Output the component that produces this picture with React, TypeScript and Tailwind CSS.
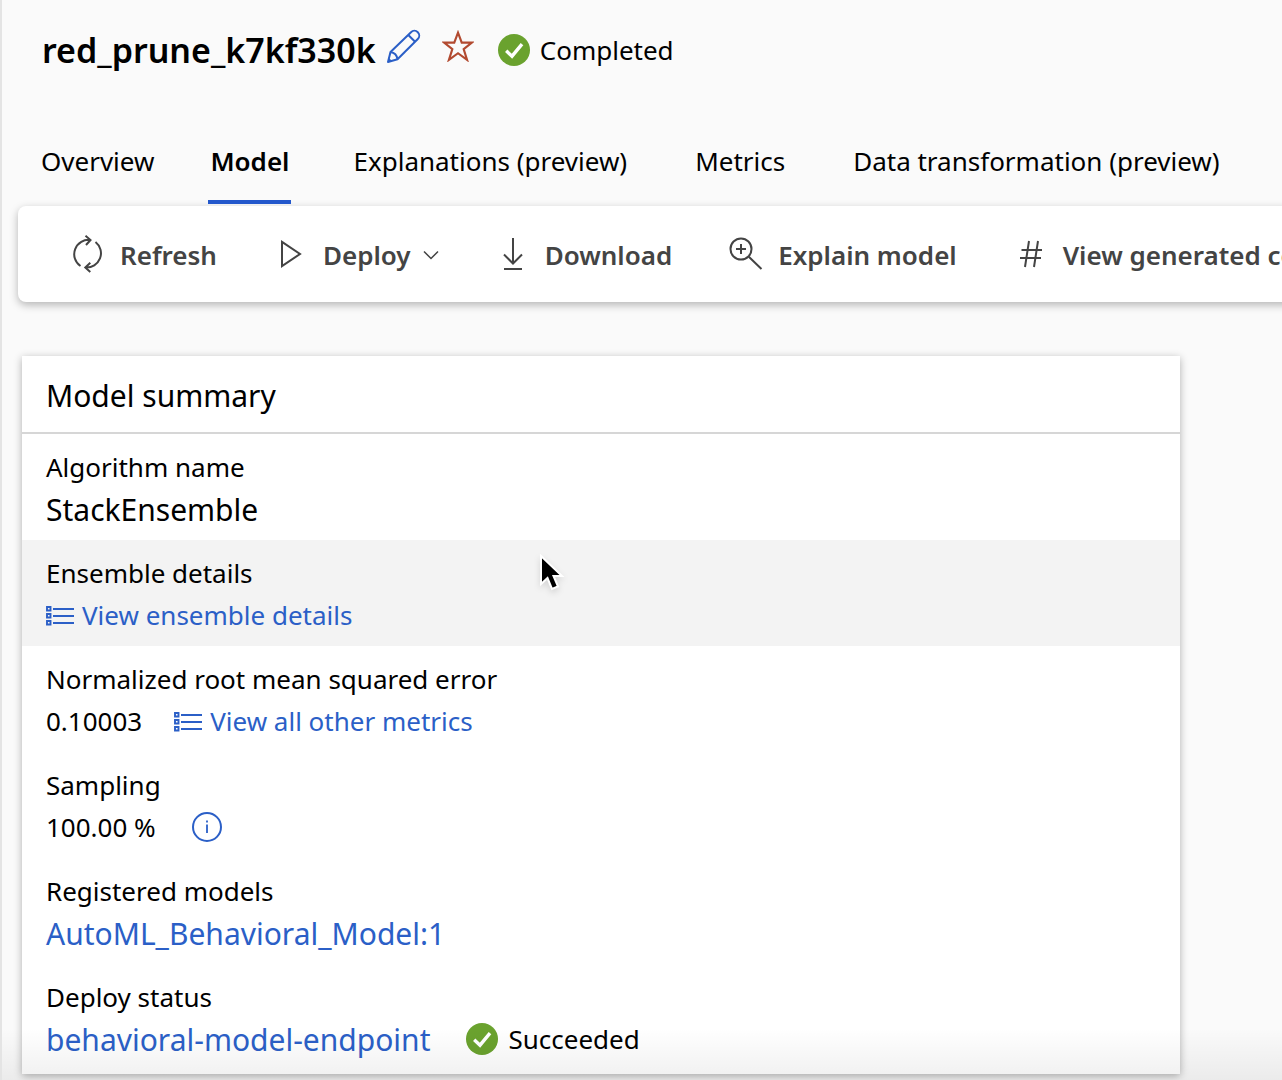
import type { ReactNode } from "react";

function PencilIcon() {
  return (
    <svg width="36" height="36" viewBox="0 0 36 36" fill="none" stroke="#2b5fc7" strokeWidth="2" strokeLinejoin="round" aria-hidden="true">
      <path d="M2 34 4.5 24 25 4.2a4.8 4.8 0 0 1 6.8 6.8L11.5 31.3Z" />
      <path d="M4.5 24c4 .6 6.400 3 7 7.300M22.300 7l6.800 6.800" />
      <path d="M2 34l1-4 3 3Z" fill="#2b5fc7" stroke="none" />
    </svg>
  );
}

function StarIcon() {
  return (
    <svg width="32" height="32" viewBox="1 1 30 30" fill="none" stroke="#b24a30" strokeWidth="2" aria-hidden="true">
      <path d="M16 3.500 19.500 12.800H29L21.300 18.900 24.500 29 16 22.800 7.500 29 10.700 18.900 3 12.800h9.500Z" />
    </svg>
  );
}

function CheckBadge() {
  return (
    <svg className="shrink-0" width="32" height="32" viewBox="0 0 32 32" aria-hidden="true">
      <circle cx="16" cy="16" r="16" fill="#6aa22e" />
      <path d="M8.200 16.800 14 22.200 24 10.200" fill="none" stroke="#fff" strokeWidth="3.400" />
    </svg>
  );
}

function RefreshIcon() {
  return (
    <svg width="36" height="40" viewBox="0 0 36 40" fill="none" stroke="#444" strokeWidth="2" aria-hidden="true">
      <path d="M10.500 32A14.300 14.300 0 0 1 20.500 6M15.500 1.800l5 4.200-4.500 5" />
      <path d="M25.500 8A14.300 14.300 0 0 1 15.500 33.500M20.300 28.700l-5 4.800 5 4.500" />
    </svg>
  );
}

function PlayIcon() {
  return (
    <svg width="22" height="30" viewBox="0 0 22 30" fill="none" stroke="#444" strokeWidth="2" aria-hidden="true">
      <path d="M2 2.800 20 15 2 27.200Z" />
    </svg>
  );
}

function ChevronIcon() {
  return (
    <svg width="16" height="10" viewBox="0 0 16 10" fill="none" stroke="#444" strokeWidth="1.500" aria-hidden="true">
      <path d="m1 1.500 7 7 7-7" />
    </svg>
  );
}

function DownloadIcon() {
  return (
    <svg width="22" height="34" viewBox="0 0 22 34" fill="none" stroke="#444" strokeWidth="2" aria-hidden="true">
      <path d="M11 1v25M2 17.500l9 9 9-9M2 32h18" />
    </svg>
  );
}

function ZoomInIcon() {
  return (
    <svg width="34" height="34" viewBox="0 0 34 34" fill="none" stroke="#444" strokeWidth="2" aria-hidden="true">
      <circle cx="12" cy="12" r="10.500" />
      <path d="M7 12h10M12 7v10M19.800 19.800 32.500 32" />
    </svg>
  );
}

function HashIcon() {
  return (
    <svg width="24" height="28" viewBox="0 0 24 28" fill="none" stroke="#444" strokeWidth="2" aria-hidden="true">
      <path d="M10 1 6 27M19 1l-4 26M2.500 10H23M1 18h21" />
    </svg>
  );
}

function ListIcon() {
  return (
    <svg className="mt-0.5 shrink-0" width="28" height="22" viewBox="0 0 28 22" fill="none" stroke="#2b5fc7" aria-hidden="true">
      <path d="M1 2h3.500v3.500H1zM1 9h3.500v3.500H1zM1 16h3.500v3.500H1z" strokeWidth="1.900" />
      <path d="M7 4h21M7 11h21M7 18h21" strokeWidth="2" />
    </svg>
  );
}

function InfoIcon() {
  return (
    <svg width="30" height="30" viewBox="0 0 30 30" fill="none" stroke="#2b5fc7" aria-hidden="true">
      <circle cx="15" cy="15" r="14" strokeWidth="2" />
      <path d="M15 12.500V21M15 8.500v2" strokeWidth="1.800" />
    </svg>
  );
}

function CursorIcon() {
  return (
    <svg className="drop-shadow-md" width="28" height="38" viewBox="0 0 28 38" aria-hidden="true">
      <path d="M2 2v28l6.500-6 4.500 11 6-2.500L14.500 22H23Z" fill="#000" stroke="#fff" strokeWidth="2" />
    </svg>
  );
}

function Tab({ children, active = false }: { children: ReactNode; active?: boolean }) {
  return (
    <button
      role="tab"
      aria-selected={active}
      className={
        active
          ? "h-21 shrink-0 border-b-4 border-[#2458cc] px-0.5 pt-0.5 font-semibold"
          : "h-21 shrink-0 border-b-4 border-transparent pt-0.5 pr-1.5 pl-3.5"
      }
    >
      {children}
    </button>
  );
}

function Command({ icon, children }: { icon: ReactNode; children: ReactNode }) {
  return (
    <button className="flex shrink-0 items-center gap-3.5">
      <span className="flex w-9 justify-center">{icon}</span>
      <span className="pt-0.5">{children}</span>
    </button>
  );
}

function Row({ label, children, shaded = false }: { label: string; children: ReactNode; shaded?: boolean }) {
  return (
    <div className={shaded ? "relative bg-[#f3f3f3] px-6 pt-3.5 pb-2" : "px-6 pt-3.5 pb-2"}>
      <dt className="leading-[38px]">{label}</dt>
      <dd className="flex h-[46px] items-center">{children}</dd>
    </div>
  );
}

export default function App() {
  return (
    <div className="relative min-h-screen overflow-hidden border-l-2 border-[#e4e4e4] bg-[#fafafa] font-['Noto_Sans','Open_Sans',sans-serif] text-[26px] whitespace-nowrap text-black">
      <header className="flex h-[120px] items-start pt-6 pl-10">
        <h1 className="text-[34px] leading-[52px] font-semibold">red_prune_k7kf330k</h1>
        <button aria-label="Edit name" className="mt-1 ml-2.5"><PencilIcon /></button>
        <button aria-label="Add to favorites" className="mt-1.5 ml-5"><StarIcon /></button>
        <div className="ml-6 flex h-[52px] items-center gap-2.5">
          <CheckBadge />
          <span>Completed</span>
        </div>
      </header>

      <div role="tablist" className="flex gap-12 pl-[25px]">
        <Tab>Overview</Tab>
        <Tab active>Model</Tab>
        <Tab>Explanations (preview)</Tab>
        <Tab>Metrics</Tab>
        <Tab>Data transformation (preview)</Tab>
      </div>

      <div className="mt-0.5 -mr-4 ml-4 rounded-l-lg bg-white shadow-[0_3px_8px_rgba(0,0,0,0.28)]">
        <div role="toolbar" aria-label="Model actions" className="flex h-24 items-center gap-14 overflow-hidden pl-[52px] font-semibold text-[#444]">
          <Command icon={<RefreshIcon />}>Refresh</Command>
          <Command icon={<PlayIcon />}>
            <span className="flex items-center gap-3">Deploy <ChevronIcon /></span>
          </Command>
          <Command icon={<DownloadIcon />}>Download</Command>
          <Command icon={<ZoomInIcon />}>Explain model</Command>
          <Command icon={<HashIcon />}>View generated code</Command>
        </div>
      </div>

      <section className="mt-[54px] mr-[102px] mb-1.5 ml-5 bg-white pb-1 shadow-[0_2px_8px_rgba(0,0,0,0.3)]">
        <h2 className="border-b-2 border-[#d6d6d6] px-6 pt-1 text-[30px] leading-[72px]">Model summary</h2>
        <dl>
          <Row label="Algorithm name">
            <span className="text-[30px]">StackEnsemble</span>
          </Row>
          <Row label="Ensemble details" shaded>
            <a href="#ensemble" className="flex items-center gap-2 text-[#2b5fc7]"><ListIcon />View ensemble details</a>
            <span className="pointer-events-none absolute top-3.5 left-[517px]"><CursorIcon /></span>
          </Row>
          <Row label="Normalized root mean squared error">
            <span>0.10003</span>
            <a href="#metrics" className="ml-8 flex items-center gap-2 text-[#2b5fc7]"><ListIcon />View all other metrics</a>
          </Row>
          <Row label="Sampling">
            <span>100.00 %</span>
            <button aria-label="Sampling information" className="ml-9"><InfoIcon /></button>
          </Row>
          <Row label="Registered models">
            <a href="#registered" className="text-[30px] text-[#2b5fc7]">AutoML_Behavioral_Model:1</a>
          </Row>
          <Row label="Deploy status">
            <a href="#endpoint" className="text-[30px] text-[#2b5fc7]">behavioral-model-endpoint</a>
            <span className="ml-9 flex items-center gap-2.5"><CheckBadge />Succeeded</span>
          </Row>
        </dl>
      </section>
      <div className="pointer-events-none absolute inset-x-0 bottom-0 h-13 bg-linear-to-b from-transparent to-black/6" />
    </div>
  );
}
